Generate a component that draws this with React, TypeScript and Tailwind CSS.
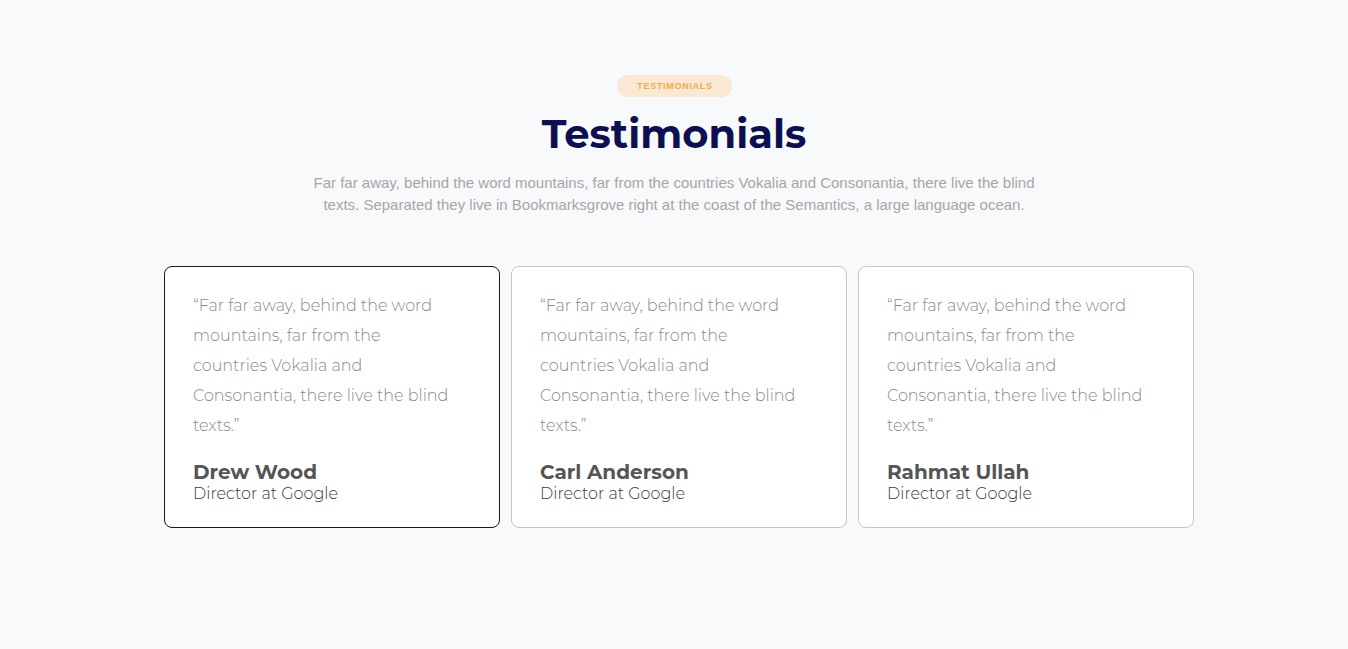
import React from "react";

const people = ["Drew Wood", "Carl Anderson", "Rahmat Ullah"];

export default function App() {
  return (
    <div className="min-h-[649px] w-full bg-[#f8f9fb]" style={{ fontFamily: "Montserrat, 'Open Sans', sans-serif" }}>
      <div className="flex flex-col items-center pt-[75px]">
        <div className="flex h-[22px] w-[115px] items-center justify-center rounded-full bg-[#fae9d2] pl-[2px] pt-[2px] text-[9px] font-bold tracking-[0.7px] text-[#f7a84a]" style={{ fontFamily: "'Liberation Sans', Arial, sans-serif" }}>
          TESTIMONIALS
        </div>
        <h1 className="mt-[11px] text-[40px] font-bold leading-[52px] text-[#0c0f52]">Testimonials</h1>
        <p className="mt-[12px] w-[740px] text-center text-[15px] leading-[22px] text-[#a6a6a6]" style={{ fontFamily: "'Liberation Sans', Arial, sans-serif" }}>
          Far far away, behind the word mountains, far from the countries Vokalia and Consonantia, there live the blind texts. Separated they live in Bookmarksgrove right at the coast of the Semantics, a large language ocean.
        </p>
      </div>
      <div className="mx-auto mt-[50px] w-[1040px] pl-[10px]">
        <div className="grid grid-cols-3 gap-[11px]">
          {people.map((name, i) => (
            <div
              key={name}
              className={`h-[262px] rounded-[8px] border bg-white pl-[28px] pr-[46px] pt-[24px] ${i === 0 ? "border-[#1a1a1a]" : "border-[#c6c6c6]"}`}
            >
              <p className="text-[16px] font-light leading-[30px] text-[#8a8a8a]">
                “Far far away, behind the word mountains, far from the countries Vokalia and Consonantia, there live the blind texts.”
              </p>
              <div className="mt-[20px] text-[20px] font-bold leading-[22px] text-[#555555]">{name}</div>
              <div className="pt-[1px] text-[16px] font-light leading-[20px] text-[#3a3a3a]">Director at Google</div>
            </div>
          ))}
        </div>
      </div>
    </div>
  );
}
